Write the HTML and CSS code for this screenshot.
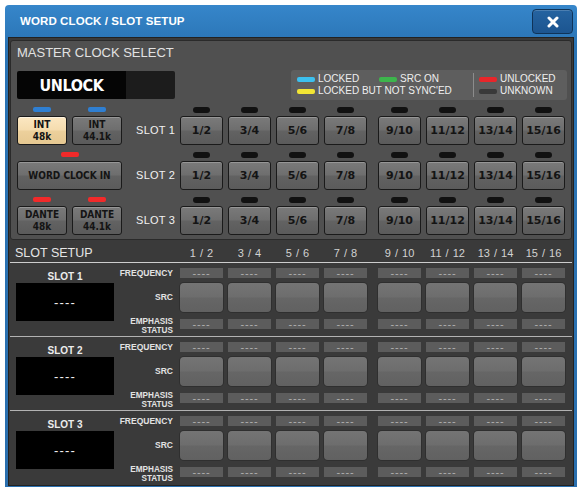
FILE: index.html
```html
<!DOCTYPE html>
<html>
<head>
<meta charset="utf-8">
<link rel="stylesheet" href="styles.css">
</head>
<body>
<div class="window">
  <div class="titlebar">
    <span class="title">WORD CLOCK / SLOT SETUP</span>
    <div class="close"><svg width="12" height="12" viewBox="0 0 12 12"><path d="M2 2L10 10M10 2L2 10" stroke="#fff" stroke-width="3" stroke-linecap="round"/></svg></div>
  </div>
  <div class="body">
    <section class="master">
      <div class="sec-title">MASTER CLOCK SELECT</div>
      <div class="status-row">
        <div class="unlock"><span class="unlock-text">UNLOCK</span><span class="unlock-side"></span></div>
        <div class="legend">
          <div class="lg-left">
            <div class="lg-row"><span class="lg-item w82"><i class="bar cyan"></i>LOCKED</span><span class="lg-item"><i class="bar green"></i>SRC ON</span></div>
            <div class="lg-row"><span class="lg-item"><i class="bar yellow"></i>LOCKED BUT NOT SYNC'ED</span></div>
          </div>
          <div class="lg-sep"></div>
          <div class="lg-right">
            <div class="lg-row"><span class="lg-item"><i class="bar red"></i>UNLOCKED</span></div>
            <div class="lg-row"><span class="lg-item"><i class="bar gray"></i>UNKNOWN</span></div>
          </div>
        </div>
      </div>
      <div class="mrows">
        <div class="mrow">
          <div class="mclk">
            <div class="cell"><span class="mled blue"></span><div class="mbtn active"><span>INT</span><span>48k</span></div></div>
            <div class="cell"><span class="mled blue"></span><div class="mbtn"><span>INT</span><span>44.1k</span></div></div>
          </div>
          <div class="slotlbl">SLOT 1</div>
          <div class="grp">
            <div class="cell"><span class="led"></span><div class="btn">1/2</div></div>
            <div class="cell"><span class="led"></span><div class="btn">3/4</div></div>
            <div class="cell"><span class="led"></span><div class="btn">5/6</div></div>
            <div class="cell"><span class="led"></span><div class="btn">7/8</div></div>
          </div>
          <div class="grp">
            <div class="cell"><span class="led"></span><div class="btn">9/10</div></div>
            <div class="cell"><span class="led"></span><div class="btn">11/12</div></div>
            <div class="cell"><span class="led"></span><div class="btn">13/14</div></div>
            <div class="cell"><span class="led"></span><div class="btn">15/16</div></div>
          </div>
        </div>
        <div class="mrow">
          <div class="mclk">
            <div class="cell wide"><span class="mled red"></span><div class="mbtn wide">WORD CLOCK IN</div></div>
          </div>
          <div class="slotlbl">SLOT 2</div>
          <div class="grp">
            <div class="cell"><span class="led"></span><div class="btn">1/2</div></div>
            <div class="cell"><span class="led"></span><div class="btn">3/4</div></div>
            <div class="cell"><span class="led"></span><div class="btn">5/6</div></div>
            <div class="cell"><span class="led"></span><div class="btn">7/8</div></div>
          </div>
          <div class="grp">
            <div class="cell"><span class="led"></span><div class="btn">9/10</div></div>
            <div class="cell"><span class="led"></span><div class="btn">11/12</div></div>
            <div class="cell"><span class="led"></span><div class="btn">13/14</div></div>
            <div class="cell"><span class="led"></span><div class="btn">15/16</div></div>
          </div>
        </div>
        <div class="mrow">
          <div class="mclk">
            <div class="cell"><span class="mled red"></span><div class="mbtn"><span>DANTE</span><span>48k</span></div></div>
            <div class="cell"><span class="mled red"></span><div class="mbtn"><span>DANTE</span><span>44.1k</span></div></div>
          </div>
          <div class="slotlbl">SLOT 3</div>
          <div class="grp">
            <div class="cell"><span class="led"></span><div class="btn">1/2</div></div>
            <div class="cell"><span class="led"></span><div class="btn">3/4</div></div>
            <div class="cell"><span class="led"></span><div class="btn">5/6</div></div>
            <div class="cell"><span class="led"></span><div class="btn">7/8</div></div>
          </div>
          <div class="grp">
            <div class="cell"><span class="led"></span><div class="btn">9/10</div></div>
            <div class="cell"><span class="led"></span><div class="btn">11/12</div></div>
            <div class="cell"><span class="led"></span><div class="btn">13/14</div></div>
            <div class="cell"><span class="led"></span><div class="btn">15/16</div></div>
          </div>
        </div>
      </div>
    </section>

    <section class="setup">
      <div class="shead">
        <div class="stitle">SLOT SETUP</div>
        <div class="grp"><span class="ch">1 / 2</span><span class="ch">3 / 4</span><span class="ch">5 / 6</span><span class="ch">7 / 8</span></div>
        <div class="grp"><span class="ch">9 / 10</span><span class="ch">11 / 12</span><span class="ch">13 / 14</span><span class="ch">15 / 16</span></div>
      </div>

      <div class="block">
        <div class="sinfo"><div class="sname">SLOT 1</div><div class="sdisp">----</div></div>
        <div class="srows">
          <div class="srow freq"><div class="rlabel">FREQUENCY</div>
            <div class="grp"><div class="fcell">----</div><div class="fcell">----</div><div class="fcell">----</div><div class="fcell">----</div></div>
            <div class="grp"><div class="fcell">----</div><div class="fcell">----</div><div class="fcell">----</div><div class="fcell">----</div></div>
          </div>
          <div class="srow src"><div class="rlabel">SRC</div>
            <div class="grp"><div class="scell"></div><div class="scell"></div><div class="scell"></div><div class="scell"></div></div>
            <div class="grp"><div class="scell"></div><div class="scell"></div><div class="scell"></div><div class="scell"></div></div>
          </div>
          <div class="srow emph"><div class="rlabel two">EMPHASIS<br>STATUS</div>
            <div class="grp"><div class="fcell">----</div><div class="fcell">----</div><div class="fcell">----</div><div class="fcell">----</div></div>
            <div class="grp"><div class="fcell">----</div><div class="fcell">----</div><div class="fcell">----</div><div class="fcell">----</div></div>
          </div>
        </div>
      </div>

      <div class="block">
        <div class="sinfo"><div class="sname">SLOT 2</div><div class="sdisp">----</div></div>
        <div class="srows">
          <div class="srow freq"><div class="rlabel">FREQUENCY</div>
            <div class="grp"><div class="fcell">----</div><div class="fcell">----</div><div class="fcell">----</div><div class="fcell">----</div></div>
            <div class="grp"><div class="fcell">----</div><div class="fcell">----</div><div class="fcell">----</div><div class="fcell">----</div></div>
          </div>
          <div class="srow src"><div class="rlabel">SRC</div>
            <div class="grp"><div class="scell"></div><div class="scell"></div><div class="scell"></div><div class="scell"></div></div>
            <div class="grp"><div class="scell"></div><div class="scell"></div><div class="scell"></div><div class="scell"></div></div>
          </div>
          <div class="srow emph"><div class="rlabel two">EMPHASIS<br>STATUS</div>
            <div class="grp"><div class="fcell">----</div><div class="fcell">----</div><div class="fcell">----</div><div class="fcell">----</div></div>
            <div class="grp"><div class="fcell">----</div><div class="fcell">----</div><div class="fcell">----</div><div class="fcell">----</div></div>
          </div>
        </div>
      </div>

      <div class="block">
        <div class="sinfo"><div class="sname">SLOT 3</div><div class="sdisp">----</div></div>
        <div class="srows">
          <div class="srow freq"><div class="rlabel">FREQUENCY</div>
            <div class="grp"><div class="fcell">----</div><div class="fcell">----</div><div class="fcell">----</div><div class="fcell">----</div></div>
            <div class="grp"><div class="fcell">----</div><div class="fcell">----</div><div class="fcell">----</div><div class="fcell">----</div></div>
          </div>
          <div class="srow src"><div class="rlabel">SRC</div>
            <div class="grp"><div class="scell"></div><div class="scell"></div><div class="scell"></div><div class="scell"></div></div>
            <div class="grp"><div class="scell"></div><div class="scell"></div><div class="scell"></div><div class="scell"></div></div>
          </div>
          <div class="srow emph"><div class="rlabel two">EMPHASIS<br>STATUS</div>
            <div class="grp"><div class="fcell">----</div><div class="fcell">----</div><div class="fcell">----</div><div class="fcell">----</div></div>
            <div class="grp"><div class="fcell">----</div><div class="fcell">----</div><div class="fcell">----</div><div class="fcell">----</div></div>
          </div>
        </div>
      </div>
    </section>
  </div>
</div>
</body>
</html>
```

FILE: styles.css
```css
* { box-sizing: border-box; }
body {
  margin: 0;
  background: #fff;
  font-family: "Liberation Sans", Arial, sans-serif;
}
.window {
  margin: 5px 0 0 5px;
  width: 572px;
  background: linear-gradient(#3686ca, #2a74b5 40px, #2a6fae);
  border-radius: 4px 4px 0 0;
  padding: 0 3px 1px 3px;
}
.titlebar {
  height: 32px;
  display: flex;
  align-items: center;
  justify-content: space-between;
  padding: 0 1px 0 12px;
}
.title {
  color: #fff;
  font-size: 11.5px;
  font-weight: bold;
  letter-spacing: 0.1px;
}
.close {
  width: 41px;
  height: 25px;
  margin-top: 1px;
  border: 1px solid #0f3358;
  border-radius: 4px;
  background: linear-gradient(#2563a0, #1c5590);
  box-shadow: inset 0 1px 0 rgba(255,255,255,0.18);
  display: flex;
  align-items: center;
  justify-content: center;
}
.body {
  background: #3a3a3a;
  border: 1px solid #222;
  padding: 2px 1px 1px 1px;
}
.master {
  background: #505050;
  border: 1px solid #2a2a2a;
  border-radius: 3px;
  padding: 4px 4px 4px 6px;
  margin-bottom: 3px;
}
.sec-title {
  font-size: 13px;
  line-height: 16px;
  color: #e2e2e2;
}
.status-row {
  margin-top: 9px;
  height: 30px;
  display: flex;
  align-items: center;
  justify-content: space-between;
}
.unlock {
  width: 158px;
  height: 28px;
  display: flex;
  border-radius: 2px;
  overflow: hidden;
}
.unlock-text {
  width: 109px;
  background: #050505;
  color: #fff;
  font-family: "DejaVu Sans Condensed", "DejaVu Sans", sans-serif;
  font-stretch: condensed;
  font-weight: bold;
  font-size: 16px;
  letter-spacing: -0.4px;
  display: flex;
  align-items: center;
  justify-content: center;
}
.unlock-side {
  flex: 1;
  background: #1c1c1c;
}
.legend {
  width: 276px;
  height: 30px;
  background: #5e5e5e;
  border-radius: 3px;
  display: flex;
  align-items: center;
  padding-left: 6px;
}
.lg-left { width: 170px; }
.lg-sep {
  width: 1px;
  height: 24px;
  background: #8c8c8c;
  margin: 0 5px 0 6px;
}
.lg-row {
  display: flex;
  height: 12px;
  align-items: center;
}
.lg-item {
  display: flex;
  align-items: center;
  font-size: 10px;
  line-height: 12px;
  color: #efefef;
  white-space: nowrap;
}
.w82 { width: 82px; }
.bar {
  width: 18px;
  height: 5px;
  border-radius: 2px;
  margin-right: 3px;
}
.cyan { background: #3cc0ef; }
.green { background: #3db54c; }
.yellow { background: #f2e534; }
.red { background: #e8262a; }
.gray { background: #393939; }

.mrows {
  margin-top: 7px;
  display: flex;
  flex-direction: column;
  gap: 7px;
}
.mrow {
  display: flex;
  align-items: flex-end;
}
.mclk {
  width: 105px;
  display: flex;
  gap: 5px;
}
.cell {
  display: flex;
  flex-direction: column;
  align-items: center;
}
.cell.wide { width: 105px; }
.slotlbl {
  width: 58px;
  height: 29px;
  line-height: 29px;
  text-align: right;
  padding-right: 5px;
  font-size: 11px;
  color: #f2f2f2;
  letter-spacing: 0.2px;
}
.grp {
  display: flex;
  gap: 5px;
}
.grp + .grp { margin-left: 11px; }
.led {
  display: block;
  width: 17px;
  height: 6px;
  border-radius: 3px;
  background: #111;
  margin-bottom: 3px;
}
.mled {
  display: block;
  width: 18px;
  height: 5px;
  border-radius: 2px;
  margin-bottom: 4px;
}
.mled.blue { background: #2f7fd2; }
.mled.red { background: #f22a2a; }
.btn, .mbtn {
  width: 43px;
  height: 29px;
  border: 1px solid #1a1a1a;
  border-radius: 3px;
  background: linear-gradient(#7a7a7a, #6e6e6e 48%, #626262 52%, #5b5b5b);
  box-shadow: inset 0 1px 0 rgba(255,255,255,0.22);
  display: flex;
  align-items: center;
  justify-content: center;
  color: #141414;
  font-family: "DejaVu Sans", sans-serif;
  font-weight: bold;
  font-size: 11px;
}
.mbtn {
  width: 50px;
  flex-direction: column;
  font-family: "DejaVu Sans Condensed", "DejaVu Sans", sans-serif;
  font-stretch: condensed;
  font-size: 10px;
  line-height: 12px;
}
.mbtn.wide { width: 105px; }
.mbtn.active {
  background: linear-gradient(#fbe7c2, #f5dcae 48%, #ecd09c 52%, #e6c891);
  box-shadow: inset 0 1px 0 rgba(255,255,255,0.5);
}

.shead {
  display: flex;
  align-items: baseline;
  height: 20px;
  padding-top: 3px;
  border-bottom: 1px solid #cdcdcd;
}
.stitle {
  width: 170px;
  padding-left: 5px;
  font-size: 12.5px;
  line-height: 15px;
  color: #e6e6e6;
}
.ch {
  width: 43px;
  text-align: center;
  font-size: 11px;
  word-spacing: 1px;
  color: #d2d2d2;
}
.block {
  display: flex;
  height: 74px;
  border-bottom: 1px solid #b2b2b2;
}
.block:last-child {
  border-bottom: none;
  height: 73px;
}
.sinfo {
  width: 98px;
  margin-left: 6px;
  padding-top: 8px;
}
.sname {
  height: 12px;
  line-height: 12px;
  text-align: center;
  font-size: 10px;
  font-weight: bold;
  color: #ececec;
}
.sdisp {
  height: 38px;
  background: #000;
  color: #f0f0f0;
  display: flex;
  align-items: center;
  justify-content: center;
  font-size: 13px;
  letter-spacing: 1.2px;
}
.srows {
  padding-top: 5px;
  display: flex;
  flex-direction: column;
}
.srow {
  display: flex;
  align-items: center;
}
.srow.freq, .srow.emph { height: 10px; }
.srow.src { height: 29px; margin: 5px 0 7px; }
.rlabel {
  width: 66px;
  padding-right: 7px;
  text-align: right;
  font-size: 8.5px;
  line-height: 9px;
  font-weight: bold;
  color: #e2e2e2;
}
.rlabel.two {
  margin-top: 5px;
  font-size: 8.2px;
  line-height: 8.5px;
}
.fcell {
  width: 43px;
  height: 10px;
  background: #5c5c5c;
  color: #b0b0b0;
  font-size: 11px;
  line-height: 10px;
  text-align: center;
  letter-spacing: 0.8px;
}
.scell {
  width: 43px;
  height: 29px;
  border-radius: 4px;
  background: linear-gradient(#747474, #6d6d6d 48%, #666 52%, #616161);
  box-shadow: 0 0 0 1px #2f2f2f;
}
```
